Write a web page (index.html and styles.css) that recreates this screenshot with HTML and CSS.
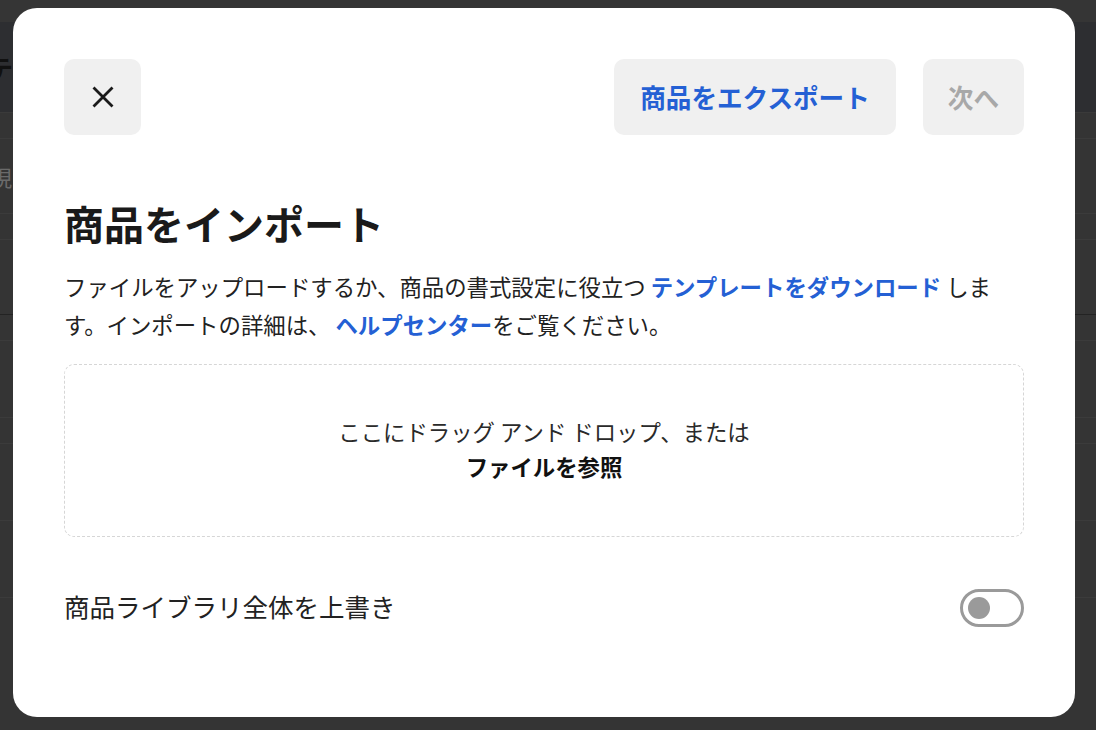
FILE: index.html
```html
<!DOCTYPE html>
<html lang="ja">
<head>
<meta charset="utf-8">
<title>商品をインポート</title>
<link rel="stylesheet" href="styles.css">
</head>
<body>
<div class="page">
  <div class="page-top"></div>
  <div class="page-header"><span class="page-title">テ</span></div>
  <div class="page-row short"></div>
  <div class="page-row tall"><span class="page-cell">現</span></div>
  <div class="page-row short"></div>
  <div class="page-row tall dark-line"></div>
  <div class="page-row short"></div>
  <div class="page-row mid"></div>
  <div class="page-row short"></div>
  <div class="page-row mid"></div>
  <div class="page-row mid"></div>
</div>

<div class="modal" role="dialog" aria-labelledby="import-title">
  <div class="modal-header">
    <button class="btn btn-icon" aria-label="閉じる">
      <svg width="22" height="22" viewBox="0 0 22 22" aria-hidden="true">
        <path d="M1.5 1.5 L20.5 20.5 M20.5 1.5 L1.5 20.5" stroke="#1a1a1a" stroke-width="2.8" stroke-linecap="butt" fill="none"/>
      </svg>
    </button>
    <div class="header-actions">
      <button class="btn btn-link">商品をエクスポート</button>
      <button class="btn btn-disabled" disabled>次へ</button>
    </div>
  </div>

  <h1 id="import-title" class="title">商品をインポート</h1>
  <p class="description">ファイルをアップロードするか、商品の書式設定に役立つ <a href="#" class="link">テンプレートをダウンロード</a> します。インポートの詳細は、 <a href="#" class="link">ヘルプセンター</a>をご覧ください。</p>

  <div class="dropzone">
    <div class="drop-line">ここにドラッグ アンド ドロップ、または</div>
    <div class="drop-browse">ファイルを参照</div>
  </div>

  <div class="option-row">
    <span class="option-label">商品ライブラリ全体を上書き</span>
    <span class="toggle" role="switch" aria-checked="false"><span class="knob"></span></span>
  </div>
</div>
</body>
</html>
```

FILE: styles.css
```css
* { box-sizing: border-box; }

html, body {
  margin: 0;
  padding: 0;
  width: 1096px;
  height: 730px;
  overflow: hidden;
  background: #343434;
  font-family: "Noto Sans CJK JP", "Noto Sans", sans-serif;
}

/* dimmed page behind the dialog */
.page {
  display: flex;
  flex-direction: column;
}
.page-top { height: 22px; background: #353535; }
.page-header {
  height: 91px;
  background: #2d2e31;
  border-bottom: 1px solid #3a3a3a;
  display: flex;
  align-items: center;
}
.page-title {
  font-size: 26px;
  font-weight: 700;
  color: #111;
  margin-left: -13px;
}
.page-row {
  border-bottom: 1px solid #3b3b3b;
  display: flex;
  align-items: center;
}
.page-row.short { height: 26px; }
.page-row.tall { height: 75px; }
.page-row.mid { height: 77px; }
.page-row.dark-line { border-bottom-color: #232323; }
.page-cell {
  font-size: 22px;
  color: #6a6a6a;
  margin-left: -10px;
}

/* dialog */
.modal {
  position: fixed;
  left: 13px;
  top: 8px;
  width: 1062px;
  height: 709px;
  background: #ffffff;
  border-radius: 24px;
  padding: 51px;
  display: flex;
  flex-direction: column;
}

.modal-header {
  display: flex;
  justify-content: space-between;
  align-items: center;
  height: 76px;
}

.header-actions {
  display: flex;
  gap: 27px;
}

.btn {
  height: 76px;
  border: none;
  border-radius: 10px;
  background: #f0f0f0;
  font-family: inherit;
  font-size: 25.6px;
  font-weight: 700;
  padding: 0 26px 2px;
  display: flex;
  align-items: center;
  justify-content: center;
  cursor: pointer;
}
.btn-icon {
  width: 77px;
  padding: 0;
}
.btn-link { color: #2460d4; }
.btn-disabled {
  color: #a8a8a8;
  padding: 0 25px 2px;
  cursor: default;
}

.title {
  margin: 62px 0 0;
  font-size: 40px;
  line-height: 52px;
  font-weight: 700;
  color: #1a1a1a;
}

.description {
  margin: 18px 0 0;
  font-size: 22.4px;
  line-height: 38px;
  color: #222222;
}

.link {
  color: #2460d4;
  font-weight: 700;
  text-decoration: none;
}

.dropzone {
  margin-top: 21px;
  height: 173px;
  border: 1px dashed #d6d6d6;
  border-radius: 10px;
  display: flex;
  flex-direction: column;
  align-items: center;
  justify-content: center;
  padding-bottom: 4px;
  font-size: 22.4px;
  line-height: 35px;
}
.drop-line { color: #2a2a2a; }
.drop-browse { color: #111; font-weight: 700; }

.option-row {
  margin-top: 52px;
  display: flex;
  justify-content: space-between;
  align-items: center;
  height: 38px;
}
.option-label {
  font-size: 25.5px;
  line-height: 34px;
  padding-bottom: 4px;
  color: #222222;
}
.toggle {
  width: 64px;
  height: 38px;
  border: 3px solid #9a9a9a;
  border-radius: 19px;
  display: flex;
  align-items: center;
  padding-left: 5px;
}
.knob {
  width: 22px;
  height: 22px;
  border-radius: 50%;
  background: #9a9a9a;
}
```
